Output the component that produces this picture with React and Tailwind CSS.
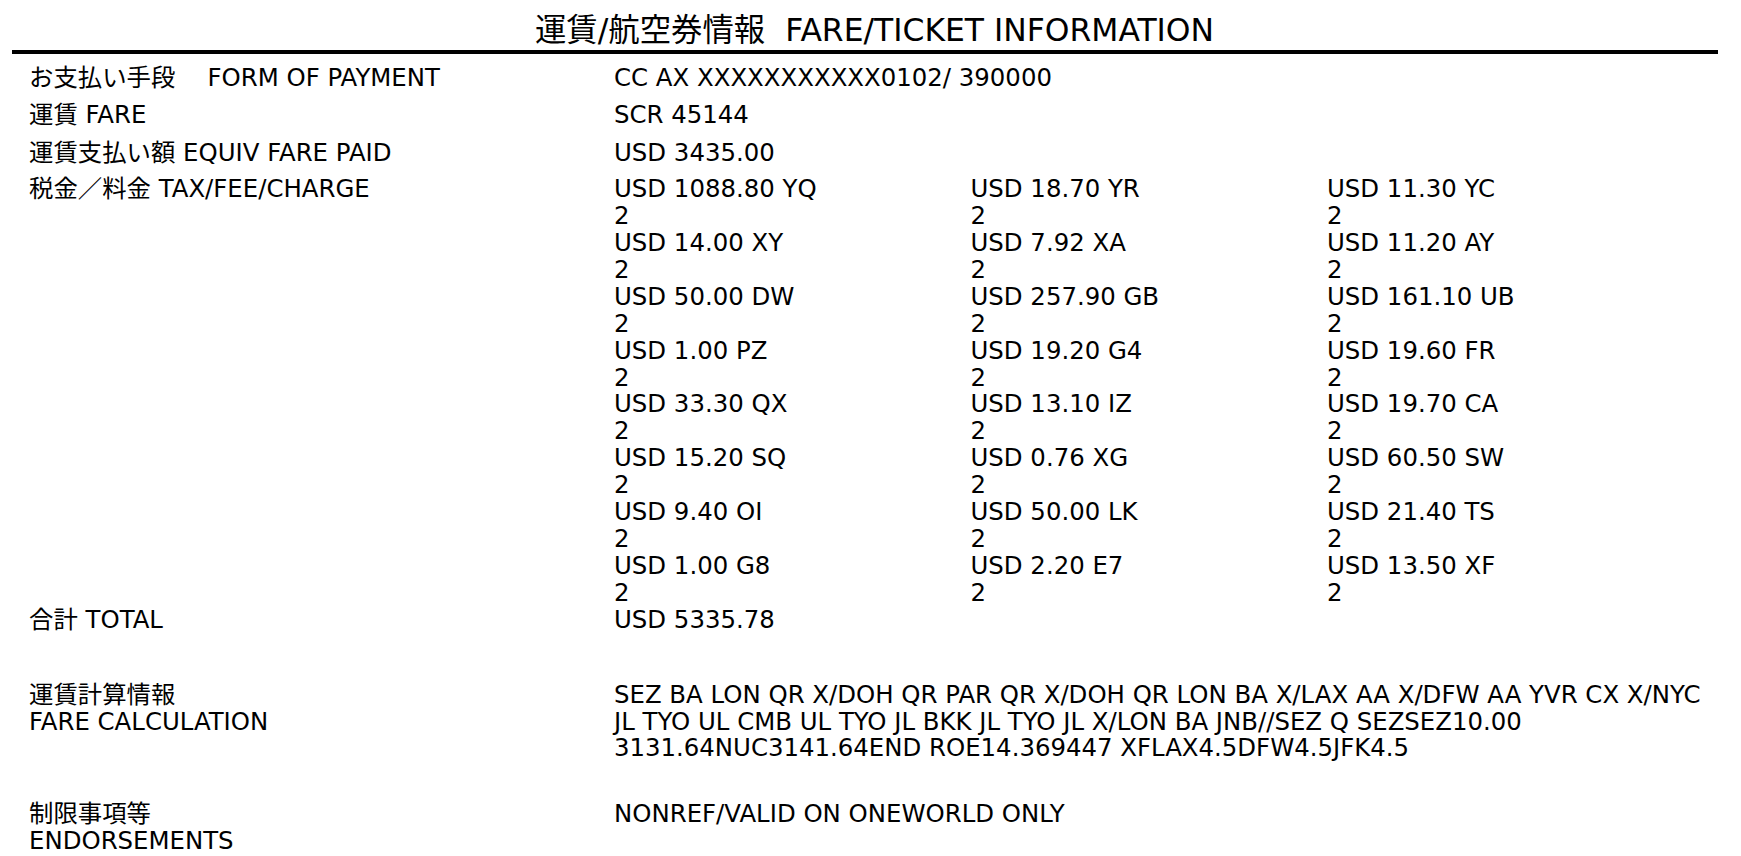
import React from 'react';

const taxes = [
    ['USD 1088.80 YQ', 'USD 18.70 YR', 'USD 11.30 YC'],
    ['USD 14.00 XY', 'USD 7.92 XA', 'USD 11.20 AY'],
    ['USD 50.00 DW', 'USD 257.90 GB', 'USD 161.10 UB'],
    ['USD 1.00 PZ', 'USD 19.20 G4', 'USD 19.60 FR'],
    ['USD 33.30 QX', 'USD 13.10 IZ', 'USD 19.70 CA'],
    ['USD 15.20 SQ', 'USD 0.76 XG', 'USD 60.50 SW'],
    ['USD 9.40 OI', 'USD 50.00 LK', 'USD 21.40 TS'],
    ['USD 1.00 G8', 'USD 2.20 E7', 'USD 13.50 XF'],
];

const fareCalc = [
    'SEZ BA LON QR X/DOH QR PAR QR X/DOH QR LON BA X/LAX AA X/DFW AA YVR CX X/NYC',
    'JL TYO UL CMB UL TYO JL BKK JL TYO JL X/LON BA JNB//SEZ Q SEZSEZ10.00',
    '3131.64NUC3141.64END ROE14.369447 XFLAX4.5DFW4.5JFK4.5',
];

function Row({ label, children, className = '' }) {
    return (
        <div className={`grid grid-cols-[585px_1fr] ${className}`}>
            <div>{label}</div>
            <div>{children}</div>
        </div>
    );
}

export default function App() {
    return (
        <div className="min-h-[856px] bg-white text-black font-['DejaVu_Sans','Noto_Sans_CJK_JP',sans-serif] text-[24.4px]">
            {/* Title */}
            <div className="pt-[10px] pl-[8px] text-center text-[31.4px] leading-[40px]">
                運賃/航空券情報&nbsp;&nbsp;FARE/TICKET INFORMATION
            </div>
            <div className="ml-[12px] w-[1706px] h-[4px] bg-black"></div>

            <div className="pl-[29px] mt-[5px]">
                <div className="leading-[37.4px]">
                    <Row label="お支払い手段　 FORM OF PAYMENT">CC AX XXXXXXXXXXX0102/ 390000</Row>
                    <Row label="運賃 FARE">SCR 45144</Row>
                    <Row label="運賃支払い額 EQUIV FARE PAID">USD 3435.00</Row>
                </div>

                <div className="leading-[26.9px]">
                    <Row label="税金／料金 TAX/FEE/CHARGE" className="pt-[5px]">
                        <div className="grid grid-cols-[356.5px_356.5px_1fr]">
                            {taxes.flat().map((t) => (
                                <div key={t}>
                                    <div>{t}</div>
                                    <div>2</div>
                                </div>
                            ))}
                        </div>
                    </Row>
                    <Row label="合計 TOTAL">USD 5335.78</Row>

                    <Row
                        className="mt-[48px]"
                        label={<><div>運賃計算情報</div><div>FARE CALCULATION</div></>}
                    >
                        {fareCalc.map((line) => (
                            <div key={line}>{line}</div>
                        ))}
                    </Row>

                    <Row
                        className="mt-[39px]"
                        label={<><div>制限事項等</div><div>ENDORSEMENTS</div></>}
                    >
                        NONREF/VALID ON ONEWORLD ONLY
                    </Row>
                </div>
            </div>
        </div>
    );
}
